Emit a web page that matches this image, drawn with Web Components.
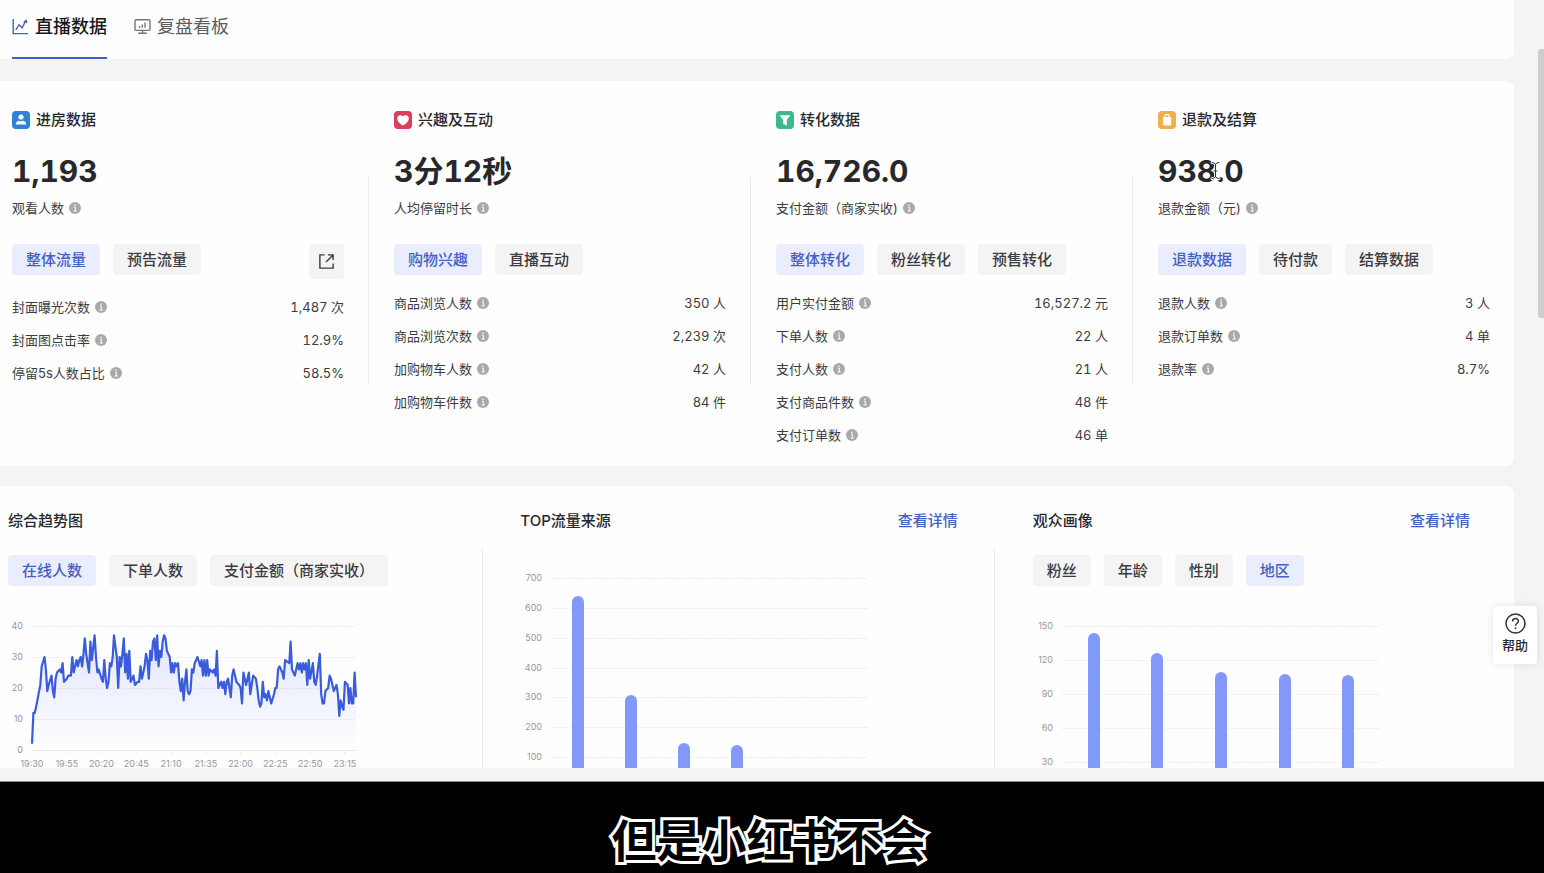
<!DOCTYPE html>
<html lang="zh-CN">
<head>
<meta charset="utf-8">
<meta name="viewport" content="width=device-width, initial-scale=1">
<title>直播数据</title>
<style>
  body
  {
    margin: 0;
    background: #f4f4f5;
    color: #28282c;
    font-family: Inter, "Noto Sans CJK SC", sans-serif;
    font-size: 15px;
    line-height: 22px;
  }
</style>
</head>
<body>

<live-page>
  <data-panel kind="tabs">
    <nav-tab icon="line" selected>直播数据</nav-tab>
    <nav-tab icon="board">复盘看板</nav-tab>
  </data-panel>

  <data-panel kind="metrics">
    <metric-card icon="person" name="进房数据" value="1,193" label="观看人数">
      <chip-button slot="chips" selected>整体流量</chip-button>
      <chip-button slot="chips">预告流量</chip-button>
      <open-button slot="chips"></open-button>
      <metric-row name="封面曝光次数" value="1,487 次"></metric-row>
      <metric-row name="封面图点击率" value="12.9%"></metric-row>
      <metric-row name="停留5s人数占比" value="58.5%"></metric-row>
    </metric-card>
    <metric-card icon="heart" name="兴趣及互动" value="3分12秒" label="人均停留时长">
      <chip-button slot="chips" selected>购物兴趣</chip-button>
      <chip-button slot="chips">直播互动</chip-button>
      <metric-row name="商品浏览人数" value="350 人"></metric-row>
      <metric-row name="商品浏览次数" value="2,239 次"></metric-row>
      <metric-row name="加购物车人数" value="42 人"></metric-row>
      <metric-row name="加购物车件数" value="84 件"></metric-row>
    </metric-card>
    <metric-card icon="funnel" name="转化数据" value="16,726.0" label="支付金额（商家实收)">
      <chip-button slot="chips" selected>整体转化</chip-button>
      <chip-button slot="chips">粉丝转化</chip-button>
      <chip-button slot="chips">预售转化</chip-button>
      <metric-row name="用户实付金额" value="16,527.2 元"></metric-row>
      <metric-row name="下单人数" value="22 人"></metric-row>
      <metric-row name="支付人数" value="21 人"></metric-row>
      <metric-row name="支付商品件数" value="48 件"></metric-row>
      <metric-row name="支付订单数" value="46 单"></metric-row>
    </metric-card>
    <metric-card icon="bag" name="退款及结算" value="938.0" label="退款金额（元)">
      <chip-button slot="chips" selected>退款数据</chip-button>
      <chip-button slot="chips">待付款</chip-button>
      <chip-button slot="chips">结算数据</chip-button>
      <metric-row name="退款人数" value="3 人"></metric-row>
      <metric-row name="退款订单数" value="4 单"></metric-row>
      <metric-row name="退款率" value="8.7%"></metric-row>
    </metric-card>
  </data-panel>

  <data-panel kind="charts">
    <chart-card name="综合趋势图">
      <chip-button slot="chips" selected>在线人数</chip-button>
      <chip-button slot="chips">下单人数</chip-button>
      <chip-button slot="chips">支付金额（商家实收）</chip-button>
      <trend-chart></trend-chart>
    </chart-card>
    <chart-card name="TOP流量来源" link="查看详情">
      <bar-chart values="640,307,148,141" slots="6" max="700" step="100" floor="100" range="179" top="23" axis="22"></bar-chart>
    </chart-card>
    <chart-card name="观众画像" link="查看详情">
      <chip-button slot="chips">粉丝</chip-button>
      <chip-button slot="chips">年龄</chip-button>
      <chip-button slot="chips">性别</chip-button>
      <chip-button slot="chips" selected>地区</chip-button>
      <bar-chart values="144,126,109,108,107" slots="5" max="150" step="30" floor="30" range="136" top="26" axis="20"></bar-chart>
    </chart-card>
  </data-panel>

  <help-button slot="float">帮助</help-button>
  <video-caption slot="caption">但是小红书不会</video-caption>
</live-page>

<script>
(function(){

const ICONS = {
  line: `<svg width="17" height="17" viewBox="0 0 17 17" fill="none" stroke="#4560c4" stroke-width="1.4">
      <path d="M1.2 1v14.6H16"/><path d="M3.8 12 7 6.8l3.200 3 3.600-7.400M11.800 4.200l2.200-1.800.8 2.600"/></svg>`,
  board: `<svg width="17" height="17" viewBox="0 0 17 17" fill="none" stroke="#77777c" stroke-width="1.4">
      <rect x="1" y="1.8" width="15" height="10.6" rx="1.2"/><path d="M8.5 12.4v2.6M4.2 15.2h8.6M5.6 9.8V8M8.3 9.8V6.4M11 9.8V4.6"/></svg>`,
  person: `<svg width="18" height="18" viewBox="0 0 18 18"><rect width="18" height="18" rx="4" fill="#2f80d8"/>
      <circle cx="9" cy="6" r="2.6" fill="#fff"/><path d="M3.8 13.6c0-2.6 1.8-3.8 3.4-3.8.6 0 1 .6 1.8.6s1.200-.6 1.800-.6c1.600 0 3.400 1.200 3.400 3.800z" fill="#fff"/></svg>`,
  heart: `<svg width="18" height="18" viewBox="0 0 18 18"><rect width="18" height="18" rx="4" fill="#d8405c"/>
      <path d="M9 14.600C5.600 12.400 3.200 10.200 3.200 7.400c0-3.200 4-4.400 5.800-1.800 1.800-2.600 5.800-1.400 5.800 1.800 0 2.800-2.400 5-5.800 7.200z" fill="#fff"/></svg>`,
  funnel: `<svg width="18" height="18" viewBox="0 0 18 18"><rect width="18" height="18" rx="4" fill="#3fb88c"/>
      <path d="M3.600 4.200h10.800L10.800 9v5.400L7.200 13V9z" fill="#fff"/></svg>`,
  bag: `<svg width="18" height="18" viewBox="0 0 18 18"><rect width="18" height="18" rx="4" fill="#edb04c"/>
      <path d="M5 6h8.200v7.600a1 1 0 0 1-1 1H6a1 1 0 0 1-1-1z" fill="#fff"/><path d="M7 7V4.600a1 1 0 0 1 1-1h2a1 1 0 0 1 1 1V7" fill="none" stroke="#fff" stroke-width="1.200"/></svg>`,
  info: `<svg width="12" height="12" viewBox="0 0 12 12"><circle cx="6" cy="6" r="6" fill="#a9a9ab"/>
      <path d="M5 5.200h1.300V9M4.600 9h3.200" fill="none" stroke="#fff" stroke-width="1"/><circle cx="6" cy="3.200" r=".8" fill="#fff"/></svg>`
};

// attaches an open root with the given markup
function render(el, html)
{
  const template = document.createElement('template');
  template.innerHTML = html;
  const root = el.attachShadow({mode: 'open'});
  root.appendChild(template.content.cloneNode(true));
  return root;
}

customElements.define('live-page', class extends HTMLElement {
  constructor()
  {
    super();
    render(this, `
    <style>
      :host
      {
        display: flex;
        flex-direction: column;
        height: 100vh;
        overflow: hidden;
        position: relative;
      }
      main
      {
        flex: 1;
        min-height: 0;
        overflow: hidden;
        margin: 0 30px 13px 0;
      }
      .thumb
      {
        position: absolute;
        top: 49px;
        right: 0;
        width: 6px;
        height: 269px;
        border-radius: 3px 0 0 3px;
        background: #cdcdce;
      }
      .cursor
      {
        position: absolute;
        top: 161px;
        left: 1210px;
      }
    </style>
    <main><slot></slot></main>
    <slot name="caption"></slot>
    <div class="thumb"></div>
    <slot name="float"></slot>
    <svg class="cursor" width="11" height="19" viewBox="0 0 11 19" fill="none" stroke-linecap="round">
      <path d="M2 1.500q3 0 3.500 2 .5-2 3.500-2M5.500 3.500v12M2 17.500q3 0 3.500-2 .5 2 3.500 2M4 10h3" stroke="#fff" stroke-width="3"/>
      <path d="M2 1.500q3 0 3.500 2 .5-2 3.500-2M5.500 3.500v12M2 17.500q3 0 3.500-2 .5 2 3.500 2M4 10h3" stroke="#333" stroke-width="1"/>
    </svg>`);
  }
});

customElements.define('data-panel', class extends HTMLElement {
  constructor()
  {
    super();
    render(this, `
    <style>
      :host
      {
        display: flex;
        background: #fefefe;
        border-radius: 0 8px 8px 0;
      }
      :host([kind=tabs])
      {
        gap: 27px;
        padding: 0 12px;
        margin-bottom: 22px;
        border-top-right-radius: 0;
      }
      :host([kind=metrics])
      {
        padding: 28px 24px 21px 12px;
        margin-bottom: 20px;
        --gap: 50px;
        --line-top: 68px;
        --line-height: 207px;
        gap: var(--gap);
      }
      :host([kind=charts])
      {
        padding: 24px 44px 24px 8px;
        --gap: 75px;
        --line-top: 39px;
        --line-height: 300px;
        gap: var(--gap);
      }
    </style>
    <slot></slot>`);
  }
});

customElements.define('nav-tab', class extends HTMLElement {
  connectedCallback()
  {
    render(this, `
    <style>
      :host { display: block; }
      button
      {
        display: flex;
        align-items: center;
        gap: 6px;
        padding: 13px 0 17px;
        border: 0;
        border-bottom: 2px solid transparent;
        background: none;
        font: inherit;
        font-size: 18px;
        line-height: 27px;
        color: #5c5c60;
      }
      :host([selected]) button
      {
        border-color: #4560c4;
        color: #18181b;
        font-weight: 500;
      }
    </style>
    <button type="button">${ICONS[this.getAttribute('icon')]}<slot></slot></button>`);
  }
});

customElements.define('chip-button', class extends HTMLElement {
  constructor()
  {
    super();
    render(this, `
    <style>
      :host { display: block; }
      button
      {
        display: block;
        height: 31px;
        padding: 0 14px;
        border: 0;
        border-radius: 4px;
        background: #f4f4f5;
        color: #3c3c40;
        font: inherit;
        font-weight: 500;
        line-height: 31px;
        white-space: nowrap;
      }
      :host([selected]) button
      {
        background: #e9edfd;
        color: #4560c4;
      }
    </style>
    <button type="button"><slot></slot></button>`);
  }
});

customElements.define('open-button', class extends HTMLElement {
  constructor()
  {
    super();
    render(this, `
    <style>
      :host { display: block; margin-left: auto; }
      button
      {
        display: grid;
        place-items: center;
        width: 35px;
        height: 35px;
        padding: 0;
        border: 0;
        border-radius: 4px;
        background: #f4f4f5;
      }
    </style>
    <button type="button" aria-label="打开">
      <svg width="17" height="17" viewBox="0 0 18 18" fill="none" stroke="#3c3c40" stroke-width="1.500">
        <path d="M7 2H2v14h14v-5M10.500 2H16v5.500M16 2 8.500 9.500"/>
      </svg>
    </button>`);
  }
});

customElements.define('metric-row', class extends HTMLElement {
  connectedCallback()
  {
    render(this, `
    <style>
      :host
      {
        display: flex;
        align-items: center;
        gap: 5px;
        font-size: 13px;
        line-height: 20px;
        color: #3c3c40;
      }
      .value
      {
        margin-left: auto;
        font-variant-numeric: tabular-nums;
      }
    </style>
    <span>${this.getAttribute('name')}</span>${ICONS.info}
    <span class="value">${this.getAttribute('value')}</span>`);
  }
});

// thin rule in the middle of the gap before the next column
const DIVIDER = `
      :host
      {
        display: block;
        flex: 1 1 0;
        min-width: 0;
        position: relative;
      }
      :host(:not(:last-of-type))::after
      {
        content: "";
        position: absolute;
        top: var(--line-top);
        right: calc(var(--gap) / -2);
        width: 1px;
        height: var(--line-height);
        background: #e9e9ec;
      }`;

customElements.define('metric-card', class extends HTMLElement {
  connectedCallback()
  {
    render(this, `
    <style>
      ${DIVIDER}
      h2
      {
        display: flex;
        align-items: center;
        gap: 6px;
        margin: 0 0 20px;
        font-size: 15px;
        font-weight: 500;
        line-height: 22px;
      }
      .total
      {
        font-size: 30px;
        font-weight: 700;
        font-variant-numeric: tabular-nums;
        line-height: 40px;
        margin-bottom: 7px;
      }
      .label
      {
        display: flex;
        align-items: center;
        gap: 5px;
        font-size: 13px;
        line-height: 20px;
        color: #3c3c40;
        margin-bottom: 26px;
      }
      .chips
      {
        display: flex;
        align-items: flex-start;
        gap: 13px;
        margin-bottom: 18px;
      }
      .rows
      {
        display: flex;
        flex-direction: column;
        gap: 13px;
      }
    </style>
    <h2>${ICONS[this.getAttribute('icon')]}${this.getAttribute('name')}</h2>
    <div class="total">${this.getAttribute('value')}</div>
    <div class="label"><span>${this.getAttribute('label')}</span>${ICONS.info}</div>
    <div class="chips"><slot name="chips"></slot></div>
    <div class="rows"><slot></slot></div>`);
  }
});

customElements.define('chart-card', class extends HTMLElement {
  connectedCallback()
  {
    const link = this.getAttribute('link');
    const chips = this.querySelector('[slot=chips]');
    render(this, `
    <style>
      ${DIVIDER}
      header
      {
        display: flex;
        justify-content: space-between;
        margin-bottom: 23px;
      }
      h2
      {
        margin: 0;
        font-size: 15px;
        font-weight: 500;
        line-height: 22px;
      }
      a
      {
        color: #4560c4;
        font-weight: 500;
        text-decoration: none;
      }
      .chips
      {
        display: flex;
        gap: 13px;
        margin-bottom: 14px;
      }
    </style>
    <header><h2>${this.getAttribute('name')}</h2>${link ? `<a href="#">${link}</a>` : ''}</header>
    ${chips ? '<div class="chips"><slot name="chips"></slot></div>' : ''}
    <slot></slot>`);
  }
});

const CHART_STYLE = `
    <style>
      :host { display: block; }
      svg { display: block; max-width: 100%; }
      text { font: 9px Inter, sans-serif; fill: #96969a; }
      .grid { stroke: #f0f0f3; stroke-dasharray: 5 1; }
      .axis { stroke: #e9e9ed; }
    </style>`;

// online viewers: minute since 19:30, count
const VIEWERS = [
  [0,2],[1,12],[2,12],[3,14],[6,21],[7,27],[9,30],[10,26],[11,19],[12,21],[14,24],[15,19],[16,17],[17,23],[18,25],
  [20,26],[21,25],[22,28],[23,22],[25,23],[26,24],[28,24],[29,30],[30,25],[31,27],[32,29],[33,27],[34,29],[35,30],
  [36,27],[37,31],[38,36],[39,31],[40,28],[41,25],[42,35],[43,29],[44,33],[45,37],[46,30],[47,25],[48,26],[50,23],
  [51,22],[52,29],[53,23],[54,20],[55,22],[56,28],[57,27],[58,30],[59,37],[61,30],[62,20],[63,30],[64,27],[65,31],
  [66,36],[67,25],[68,31],[69,23],[70,32],[71,22],[73,24],[74,21],[76,22],[77,22],[78,27],[79,23],[81,27],[82,31],
  [83,29],[84,23],[85,32],[86,29],[87,35],[88,36],[89,29],[90,37],[91,27],[92,32],[93,30],[94,35],[95,37],[96,36],
  [97,32],[99,30],[100,25],[101,28],[102,25],[103,28],[104,27],[105,28],[106,22],[107,19],[108,23],[109,16],[110,22],
  [111,26],[112,19],[113,18],[114,19],[115,26],[116,25],[117,28],[119,30],[121,27],[122,29],[123,24],[124,29],
  [125,24],[126,29],[127,24],[128,26],[130,25],[131,26],[132,24],[133,32],[134,20],[136,22],[137,20],[138,22],
  [139,18],[140,22],[141,23],[143,17],[144,24],[145,26],[147,22],[149,21],[150,20],[151,15],[152,25],[154,21],
  [156,25],[157,18],[159,24],[161,23],[162,20],[163,16],[164,14],[165,15],[166,22],[167,17],[168,18],[169,16],
  [170,19],[172,15],[174,18],[175,20],[176,20],[177,26],[178,27],[180,25],[181,23],[182,29],[185,28],[186,35],
  [187,26],[189,24],[191,28],[192,26],[193,28],[194,25],[195,28],[196,26],[197,28],[198,21],[199,29],[200,23],
  [202,28],[203,22],[204,21],[205,24],[207,31],[208,18],[209,15],[210,15],[211,19],[213,20],[214,24],[215,23],
  [217,19],[219,21],[220,18],[221,11],[222,16],[223,14],[224,13],[225,22],[227,21],[228,15],[229,20],[230,15],
  [231,15],[232,25],[233,17]
];

customElements.define('trend-chart', class extends HTMLElement {
  connectedCallback()
  {
    const left = 24, right = 348, bottom = 150, unit = 31 / 10;
    const x = m => (left + m * (right - left) / 233).toFixed(1);
    const y = v => (bottom - v * unit).toFixed(1);
    const line = VIEWERS.map(([m, v]) => `${x(m)},${y(v)}`).join(' ');

    let axes = '';
    for(let v = 0; v <= 40; v += 10)
    {
      const gy = bottom - v * unit;
      axes += `<line class="${v ? 'grid' : 'axis'}" x1="${left}" x2="${right}" y1="${gy + .5}" y2="${gy + .5}"/>
        <text x="15" y="${gy + 3}" text-anchor="end">${v}</text>`;
    }
    ['19:30', '19:55', '20:20', '20:45', '21:10', '21:35', '22:00', '22:25', '22:50', '23:15'].forEach((t, i) => {
      axes += `<line class="axis" x1="${x(i * 25)}" x2="${x(i * 25)}" y1="150" y2="154"/>
        <text x="${x(i * 25)}" y="167" text-anchor="middle">${t}</text>`;
    });

    render(this, `${CHART_STYLE}
    <svg width="360" height="180">
      <defs><linearGradient id="fade" x1="0" y1="0" x2="0" y2="1">
        <stop offset="0" stop-color="#3a5ce8" stop-opacity=".15"/>
        <stop offset="1" stop-color="#3a5ce8" stop-opacity="0"/>
      </linearGradient></defs>
      ${axes}
      <polygon points="${left},${bottom} ${line} ${right},${bottom}" fill="url(#fade)"/>
      <polyline points="${line}" fill="none" stroke="#3a5cdc" stroke-width="2.2" stroke-linejoin="round"/>
    </svg>`);
  }
});

customElements.define('bar-chart', class extends HTMLElement {
  connectedCallback()
  {
    // range is the height between the max and floor grid lines
    const num = name => Number(this.getAttribute(name));
    const values = this.getAttribute('values').split(',').map(Number);
    const left = num('axis') + 9, width = 318;
    const top = num('top'), max = num('max'), floor = num('floor'), range = num('range');
    const y = v => Math.round(top + (max - v) * range / (max - floor));
    const height = y(0);

    let out = '';
    for(let v = max; v >= floor; v -= num('step'))
    {
      out += `<line class="grid" x1="${left}" x2="${left + width}" y1="${y(v) + .5}" y2="${y(v) + .5}"/>
        <text x="${num('axis')}" y="${y(v) + 3}" text-anchor="end">${v}</text>`;
    }
    values.forEach((v, i) => {
      const cx = Math.round(left + (i + .5) * width / num('slots'));
      out += `<path d="M${cx - 6} ${height}V${y(v) + 6}a6 6 0 0 1 12 0V${height}z" fill="#8299fa"/>`;
    });
    render(this, `${CHART_STYLE}<svg width="${left + width}" height="${height}">${out}</svg>`);
  }
});

customElements.define('help-button', class extends HTMLElement {
  constructor()
  {
    super();
    render(this, `
    <style>
      :host
      {
        position: absolute;
        top: 606px;
        right: 7px;
      }
      button
      {
        display: flex;
        flex-direction: column;
        align-items: center;
        gap: 1px;
        width: 44px;
        padding: 7px 0 9px;
        border: 0;
        border-radius: 4px;
        background: #fff;
        box-shadow: 0 0 8px rgba(0, 0, 0, .1);
        color: #28282c;
        font: inherit;
        font-size: 13px;
        font-weight: 500;
        line-height: 20px;
      }
    </style>
    <button type="button">
      <svg width="21" height="21" viewBox="0 0 21 21" fill="none" stroke="#333337" stroke-width="1.500">
        <circle cx="10.500" cy="10.500" r="9.500"/>
        <path d="M7.600 8.400c0-4 5.800-3.800 5.800-.2 0 2-2.900 2.200-2.900 4.600"/>
        <path d="M10.500 14.400v1.600"/>
      </svg>
      <slot></slot>
    </button>`);
  }
});

customElements.define('video-caption', class extends HTMLElement {
  constructor()
  {
    super();
    render(this, `
    <style>
      :host
      {
        display: block;
        padding: 33px 6px 4px 0;
        border-top: 1px solid #8a8a8a;
        background: #000;
        color: #000;
        text-align: center;
        font-size: 45px;
        font-weight: 700;
        line-height: 54px;
        -webkit-text-stroke: 6px #fff;
        paint-order: stroke fill;
        stroke-linejoin: round;
      }
    </style>
    <slot></slot>`);
  }
});

})();
</script>
</body>
</html>
